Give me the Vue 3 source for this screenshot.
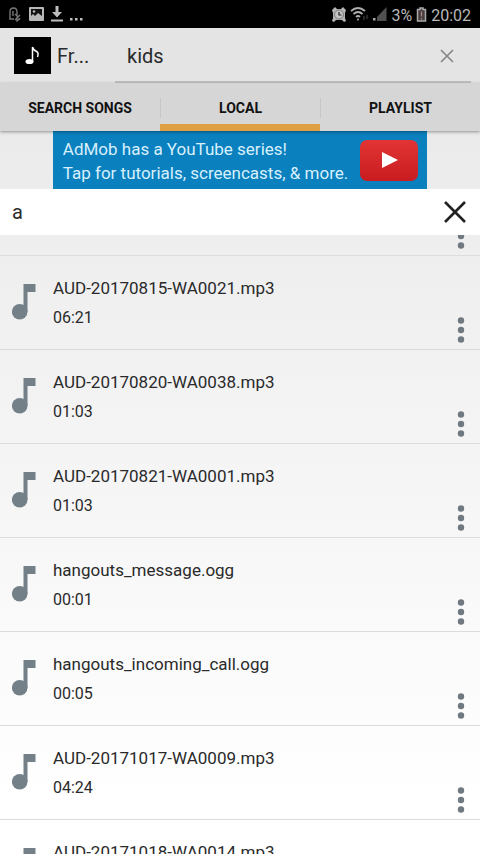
<script setup>
import { ref, onMounted } from 'vue'

const query = ref('kids')
const filter = ref('a')
const active = ref('LOCAL')
const tabs = ['SEARCH SONGS', 'LOCAL', 'PLAYLIST']
const songs = [
  { name: '', time: '' },
  { name: 'AUD-20170815-WA0021.mp3', time: '06:21' },
  { name: 'AUD-20170820-WA0038.mp3', time: '01:03' },
  { name: 'AUD-20170821-WA0001.mp3', time: '01:03' },
  { name: 'hangouts_message.ogg', time: '00:01' },
  { name: 'hangouts_incoming_call.ogg', time: '00:05' },
  { name: 'AUD-20171017-WA0009.mp3', time: '04:24' },
  { name: 'AUD-20171018-WA0014.mp3', time: '' },
]
const list = ref(null)

onMounted(() => {
  list.value.scrollTop = 73
})
</script>

<template>
  <div class="app">
    <div class="status">
      <svg width="14" height="16" viewBox="0 0 14 16" fill="none" stroke="#777" stroke-width="1.4">
        <path d="M6 13H2V6Q2 2 5.500 2Q9 2 9 6V7M5 5v5M7 8l5 5M12 9L7 14M9 6v9l3-2.500" />
      </svg>
      <svg width="15" height="14" viewBox="0 0 15 14">
        <rect width="15" height="14" rx="1" fill="#b8b8b8" />
        <path d="M2 2h11v7L9 6 6 9 4 7 2 9z" fill="#111" />
        <circle cx="5" cy="4.500" r="1.300" fill="#b8b8b8" />
      </svg>
      <svg width="12" height="16" viewBox="0 0 12 16" fill="#bdbdbd">
        <path d="M4.500 0h3v6h3.500L6 11.500 1 6h3.500zM0 13.500h12V15.500H0z" />
      </svg>
      <svg width="13" height="16" viewBox="0 0 13 16" fill="#bdbdbd">
        <path d="M0 12h2.500v2.500H0zM5 12h2.500v2.500H5zM10 12h2.500v2.500H10z" />
      </svg>
      <div class="right">
        <svg width="14" height="15" viewBox="0 0 14 15">
          <path d="M0 3L3 0 5 2H9l2-2 3 3-1 3v5l1 3-2 1-2-2H4l-2 2-2-1 1-3V6z" fill="#b5b5b5" />
          <circle cx="7" cy="7.500" r="4.500" fill="#c4c4c4" stroke="#777" />
          <path d="M7 5v3h2.500" fill="none" stroke="#222" stroke-width="1.200" />
        </svg>
        <svg width="18" height="14" viewBox="0 0 18 14" fill="none" stroke="#b0b0b0" stroke-width="1.700">
          <path d="M1 4Q8 -2 15 4M3.500 7Q8 3 12.500 7M6 10Q8 8 10 10" />
          <circle cx="8" cy="12.500" r="1" fill="#b0b0b0" stroke="none" />
          <path d="M14 9v4M17 8v4" stroke="#444" stroke-width="1.200" />
        </svg>
        <svg width="15" height="14" viewBox="0 0 15 14">
          <path d="M14.500 0V14H5V10z" fill="#505050" />
          <path d="M1 11h2.500v2.500H1z" fill="#aaa" />
        </svg>
        <span>3%</span>
        <svg width="11" height="15" viewBox="0 0 11 15">
          <path d="M1.500 2.500H4V1h3v1.500h2.500v11.500h-8z" fill="#463c3c" stroke="#aaa" stroke-width="1.500" />
          <path d="M5.500 4.500v5M5.500 11v1.500" stroke="#a88" stroke-width="1.300" />
        </svg>
        <span>20:02</span>
      </div>
    </div>

    <header class="bar">
      <svg width="37" height="37" viewBox="0 0 37 37">
        <rect width="37" height="37" fill="#000" />
        <ellipse cx="15.500" cy="24.500" rx="4" ry="2.600" fill="#fff" />
        <path d="M18.500 24.500V10q1 3.500 4.200 4.500 2.300 1.500.8 5.500" fill="none" stroke="#fff" stroke-width="1.500" />
      </svg>
      <span class="brand">Fr...</span>
      <div class="search">
        <input v-model="query" type="text" aria-label="Search songs" />
        <button type="button" aria-label="Clear search" @click="query = ''">
          <svg width="14" height="14" viewBox="0 0 14 14" stroke="#858585" stroke-width="1.600">
            <path d="M1 1L13 13M13 1L1 13" />
          </svg>
        </button>
      </div>
    </header>

    <nav class="tabs">
      <button
        v-for="t in tabs"
        :key="t"
        type="button"
        :class="{ active: t === active }"
        @click="active = t"
      >
        <span>{{ t }}</span>
      </button>
    </nav>

    <div class="ad">
      <a href="#" class="banner">
        <span>AdMob has a YouTube series!<br />Tap for tutorials, screencasts, &amp; more.</span>
        <svg width="58" height="41" viewBox="0 0 58 41">
          <defs>
            <linearGradient id="red" x1="0" y1="0" x2="0" y2="1">
              <stop offset="0" stop-color="#e23434" />
              <stop offset="1" stop-color="#c81c20" />
            </linearGradient>
          </defs>
          <rect width="58" height="41" rx="7" fill="url(#red)" />
          <path d="M22 12L38 20 22 28z" fill="#fff" />
        </svg>
      </a>
    </div>

    <div class="filter">
      <input v-model="filter" type="text" aria-label="Filter local songs" />
      <button type="button" aria-label="Clear filter" @click="filter = ''">
        <svg width="22" height="22" viewBox="0 0 22 22" stroke="#222" stroke-width="2.600">
          <path d="M1 1L21 21M21 1L1 21" />
        </svg>
      </button>
    </div>

    <ul ref="list" class="list">
      <li v-for="(s, i) in songs" :key="i">
        <svg class="note" width="24" height="36" viewBox="0 0 24 36" fill="#738087">
          <circle cx="7.700" cy="27.700" r="7.800" />
          <path d="M11.500 0H23.500V8H15.500V28H11.500z" />
        </svg>
        <div class="info">
          <span>{{ s.name }}</span>
          <span>{{ s.time }}</span>
        </div>
        <button type="button" aria-label="More options">
          <svg width="8" height="26" viewBox="0 0 8 26" fill="#707880">
            <circle cx="4" cy="3.500" r="3.200" />
            <circle cx="4" cy="13" r="3.200" />
            <circle cx="4" cy="22.500" r="3.200" />
          </svg>
        </button>
      </li>
    </ul>
  </div>
</template>

<style>
body {
  margin: 0;
}
</style>

<style scoped>
.app {
  display: flex;
  flex-direction: column;
  height: 100vh;
  overflow: hidden;
  font-family: Roboto, "Liberation Sans", sans-serif;
  color: #2a2a2a;
  background: linear-gradient(#e6e6e6, #eeeeef 28%, #ffffff 94%);
}
* {
  box-sizing: border-box;
}
svg {
  display: block;
  flex: none;
}
button,
input {
  margin: 0;
  padding: 0;
  border: 0;
  background: none;
  color: inherit;
  font: inherit;
  outline: none;
}
input {
  flex: 1;
  min-width: 0;
}
.status {
  display: flex;
  align-items: center;
  gap: 7px;
  flex: none;
  height: 28px;
  padding: 0 9px 0 8px;
  background: #000;
  color: #b8b8b8;
  font-size: 16px;
}
.right {
  display: flex;
  align-items: center;
  gap: 4px;
  margin-left: auto;
}
.right span {
  padding-top: 2px;
}
.bar {
  display: flex;
  align-items: center;
  flex: none;
  height: 55px;
  padding: 0 9px 0 14px;
  background: #e4e4e4;
  font-size: 20px;
}
.brand {
  width: 58px;
  padding-left: 6px;
}
.search {
  display: flex;
  align-items: center;
  align-self: stretch;
  flex: 1;
  margin-left: 6px;
  padding: 2px 17px 0 12px;
  border-bottom: 2px solid #c0c0c0;
}
.tabs {
  display: grid;
  grid-template-columns: repeat(3, 1fr);
  flex: none;
  height: 48px;
  background: #d6d6d6;
  box-shadow: 0 1px 3px #00000060;
  z-index: 1;
}
.tabs button {
  color: #111;
  font-size: 14px;
  font-weight: 700;
  border-bottom: 7px solid transparent;
  padding-top: 9px;
}
.tabs span {
  display: block;
  line-height: 20px;
}
.tabs button + button span {
  border-left: 1px solid #c6c6c6;
}
.tabs .active {
  border-bottom-color: #dfa043;
}
.ad {
  display: flex;
  justify-content: center;
  flex: none;
}
.banner {
  display: flex;
  align-items: center;
  justify-content: space-between;
  width: 78%;
  height: 58px;
  padding: 0 9px 0 10px;
  background: #0a80bf;
  color: #d8f0fc;
  font-size: 17px;
  line-height: 24px;
  text-decoration: none;
  white-space: nowrap;
}
.banner span {
  padding-top: 2px;
}
.filter {
  display: flex;
  align-items: center;
  flex: none;
  height: 46px;
  padding: 0 14px 0 12px;
  background: #fff;
  font-size: 20px;
}
.list {
  flex: 1;
  min-height: 0;
  margin: 0;
  padding: 0;
  overflow-y: auto;
  scrollbar-width: none;
  list-style: none;
}
.list li {
  display: flex;
  height: 94px;
  padding: 0 15px 0 12px;
  border-bottom: 1px solid #dcdcde;
}
.note {
  margin-top: 28px;
}
.info {
  display: flex;
  flex-direction: column;
  flex: 1;
  padding: 18px 0 0 17px;
  font-size: 17px;
  line-height: 29px;
}
.info span + span {
  font-size: 16px;
}
.list button {
  align-self: flex-end;
  padding-bottom: 6px;
}
</style>
